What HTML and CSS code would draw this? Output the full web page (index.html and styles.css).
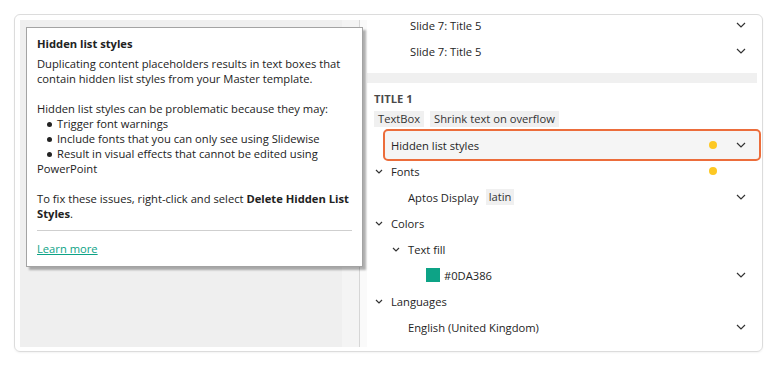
FILE: index.html
```html
<!DOCTYPE html>
<html lang="en">
<head>
  <meta charset="UTF-8" />
  <title>Hidden list styles</title>
  <link rel="stylesheet" href="styles.css">
</head>
<body>
  <div class="frame">
    <div class="canvas"></div>
    <div class="gutter"></div>
    <div class="divider"></div>
    <div class="panel-edge"></div>

    <div class="panel">
      <div class="panel-scroll">
        <div class="row slide-row">
          <span class="label">Slide 7: Title 5</span>
          <div class="row-end">
            <svg class="chevron" width="10" height="6" viewBox="0 0 10 6"><path d="M1 1L5 5L9 1"/></svg>
          </div>
        </div>
        <div class="row slide-row">
          <span class="label">Slide 7: Title 5</span>
          <div class="row-end">
            <svg class="chevron" width="10" height="6" viewBox="0 0 10 6"><path d="M1 1L5 5L9 1"/></svg>
          </div>
        </div>
      </div>

      <div class="band"></div>

      <div class="shape">
        <div class="shape-title">TITLE 1</div>
        <div class="tags">
          <span class="tag">TextBox</span>
          <span class="tag">Shrink text on overflow</span>
        </div>

        <div class="row issue-row">
          <span class="label">Hidden list styles</span>
          <div class="row-end">
            <span class="warn-dot"></span>
            <svg class="chevron" width="10" height="6" viewBox="0 0 10 6"><path d="M1 1L5 5L9 1"/></svg>
          </div>
        </div>

        <div class="row lvl-0">
          <svg class="twisty" width="8" height="5" viewBox="0 0 8 5"><path d="M1 1L4 4L7 1"/></svg>
          <span class="label">Fonts</span>
          <div class="row-end">
            <span class="warn-dot"></span>
            <span class="chevron-slot"></span>
          </div>
        </div>
        <div class="row leaf-1">
          <span class="label">Aptos Display</span>
          <span class="tag">latin</span>
          <div class="row-end">
            <svg class="chevron" width="10" height="6" viewBox="0 0 10 6"><path d="M1 1L5 5L9 1"/></svg>
          </div>
        </div>

        <div class="row lvl-0">
          <svg class="twisty" width="8" height="5" viewBox="0 0 8 5"><path d="M1 1L4 4L7 1"/></svg>
          <span class="label">Colors</span>
        </div>
        <div class="row lvl-1">
          <svg class="twisty" width="8" height="5" viewBox="0 0 8 5"><path d="M1 1L4 4L7 1"/></svg>
          <span class="label">Text fill</span>
        </div>
        <div class="row leaf-2">
          <span class="swatch"></span>
          <span class="label">#0DA386</span>
          <div class="row-end">
            <svg class="chevron" width="10" height="6" viewBox="0 0 10 6"><path d="M1 1L5 5L9 1"/></svg>
          </div>
        </div>

        <div class="row lvl-0">
          <svg class="twisty" width="8" height="5" viewBox="0 0 8 5"><path d="M1 1L4 4L7 1"/></svg>
          <span class="label">Languages</span>
        </div>
        <div class="row leaf-1">
          <span class="label">English (United Kingdom)</span>
          <div class="row-end">
            <svg class="chevron" width="10" height="6" viewBox="0 0 10 6"><path d="M1 1L5 5L9 1"/></svg>
          </div>
        </div>
      </div>
    </div>

    <div class="tooltip">
      <div class="tip-title">Hidden list styles</div>
      <p>Duplicating content placeholders results in text boxes that contain hidden list styles from your Master template.</p>
      <p>
        Hidden list styles can be problematic because they may:
        <span class="tip-bullet"><span class="bullet"></span>Trigger font warnings</span>
        <span class="tip-bullet"><span class="bullet"></span>Include fonts that you can only see using Slidewise</span>
        <span class="tip-bullet"><span class="bullet"></span>Result in visual effects that cannot be edited using PowerPoint</span>
      </p>
      <p>To fix these issues, right-click and select <b>Delete Hidden List Styles</b>.</p>
      <div class="tip-rule"></div>
      <a class="tip-link" href="#">Learn more</a>
    </div>
  </div>
</body>
</html>
```

FILE: styles.css
```css
:root {
  --text: #242424;
  --muted: #4a4a4a;
  --canvas: #efefef;
  --chip: #f0f0f0;
  --orange: #ec6d3b;
  --yellow: #fdc823;
  --teal: #0da386;
}

body {
  margin: 0;
  padding: 14px;
  background: #fff;
  font-family: "Open Sans", "Noto Sans", sans-serif;
  font-size: 11.2px;
  color: var(--text);
}

.frame {
  position: relative;
  display: flex;
  width: 749px;
  height: 338px;
  box-sizing: border-box;
  padding: 5px 0 4px 5px;
  border: 1px solid #dcdcdc;
  border-radius: 6px;
  box-shadow: 0 1px 2px rgba(0, 0, 0, 0.05);
}

.canvas {
  width: 322px;
  background: var(--canvas);
}

.gutter {
  width: 17px;
  background: #f4f4f4;
}

.divider {
  width: 1px;
  background: #d6d6d6;
}

.panel-edge {
  width: 7px;
  background: #fafafa;
}

.panel {
  width: 395px;
}

.panel-scroll {
  margin-top: -8px;
}

/* rows */
.row {
  display: flex;
  align-items: center;
  height: 26px;
  padding-right: 16px;
  white-space: nowrap;
}

.row-end {
  display: flex;
  align-items: center;
  margin-left: auto;
}

.chevron, .twisty {
  fill: none;
  stroke: #333;
  stroke-width: 1.2;
}

.chevron-slot {
  width: 10px;
}

.twisty {
  margin-right: 8px;
}

.slide-row { padding-left: 43px; }
.lvl-0 { padding-left: 8px; }
.lvl-1 { padding-left: 25px; }
.leaf-1 { padding-left: 41px; }
.leaf-2 { padding-left: 59px; }

.warn-dot {
  width: 8px;
  height: 8px;
  border-radius: 50%;
  background: var(--yellow);
  margin-right: 19px;
}

.band {
  height: 10px;
  margin: 9px 5px 0 0;
  background: #f0f0f0;
}

.shape {
  padding-top: 8px;
}

.shape-title {
  padding-left: 7px;
  font-weight: 700;
  color: var(--muted);
  line-height: 16px;
}

.tags {
  display: flex;
  gap: 6px;
  padding-left: 7px;
  margin-top: 4px;
}

.tag {
  background: var(--chip);
  padding: 0 4px;
  line-height: 16px;
  color: #333;
}

.leaf-1 .tag {
  margin-left: 7px;
  padding: 0 3px;
}

.issue-row {
  height: 28px;
  margin: 4px 3px 0 18px;
  padding: 0 13px 0 6px;
  background: #f5f5f5;
  border-radius: 3px;
  outline: 2px solid var(--orange);
}

.issue-row + .row {
  margin-top: -1px;
}

.swatch {
  width: 14px;
  height: 14px;
  background: var(--teal);
  margin-right: 4px;
}

/* tooltip */
.tooltip {
  position: absolute;
  left: 11px;
  top: 12px;
  width: 337px;
  box-sizing: border-box;
  padding: 8px 10px 10px;
  background: #fff;
  border: 1px solid #a3a3a3;
  box-shadow: 3px 3px 2px rgba(0, 0, 0, 0.3);
  line-height: 15px;
  color: #222;
}

.tip-title {
  font-weight: 700;
  margin-bottom: 5px;
}

.tooltip p {
  margin: 0 0 15px;
}

.tip-bullet {
  display: block;
  text-indent: 10px;
}

.bullet {
  display: inline-block;
  width: 5px;
  height: 5px;
  border-radius: 50%;
  background: #222;
  margin-right: 5px;
  vertical-align: 1px;
}

.tooltip p:last-of-type {
  margin-bottom: 9px;
}

.tip-rule {
  height: 1px;
  background: #cfcfcf;
  margin-bottom: 10px;
}

.tip-link {
  color: var(--teal);
  text-decoration: underline;
}
```
